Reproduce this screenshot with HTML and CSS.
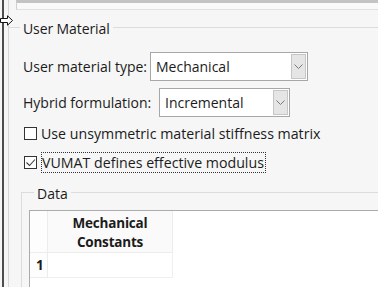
FILE: index.html
```html
<!DOCTYPE html>
<html>
<head>
<meta charset="utf-8">
<link rel="stylesheet" href="styles.css">
</head>
<body>
<div class="screen">
  <div class="edge"></div>
  <div class="main">
    <div class="prev"></div>
    <div class="group user">
      <div class="ghead">
        <span class="gline short"></span>
        <span class="gtitle">User Material</span>
        <span class="gline"></span>
      </div>
      <div class="row r1">
        <span class="label">User material type:</span>
        <div class="combo c1">
          <span class="val">Mechanical</span>
          <span class="btn"><svg width="9" height="5" viewBox="0 0 9 5"><polyline points="0.5,0.5 4.5,4.5 8.5,0.5" fill="none" stroke="#7a7a7a" stroke-width="1"/></svg></span>
        </div>
      </div>
      <div class="row r2">
        <span class="label">Hybrid formulation:</span>
        <div class="combo c2">
          <span class="val">Incremental</span>
          <span class="btn"><svg width="9" height="5" viewBox="0 0 9 5"><polyline points="0.5,0.5 4.5,4.5 8.5,0.5" fill="none" stroke="#7a7a7a" stroke-width="1"/></svg></span>
        </div>
      </div>
      <div class="check k1">
        <span class="box"></span>
        <span class="ctext">Use unsymmetric material stiffness matrix</span>
      </div>
      <div class="check k2">
        <span class="box"><svg width="11" height="11" viewBox="0 0 11 11"><polyline points="1.5,5.5 4.5,8.5 10,2.5" fill="none" stroke="#3a3a3a" stroke-width="1.1"/></svg></span>
        <span class="ctext focus">VUMAT defines effective modulus</span>
      </div>
    </div>
    <div class="data">
      <div class="dhead">
        <span class="gline short2"></span>
        <span class="dtitle">Data</span>
        <span class="gline"></span>
      </div>
      <div class="dbody">
        <div class="table">
          <div class="corner"></div>
          <div class="hcell">Mechanical<br>Constants</div>
          <div class="fill"></div>
          <div class="rh">1</div>
          <div class="cell"></div>
          <div class="fill"></div>
        </div>
      </div>
    </div>
  </div>
  <svg class="cursor" width="14" height="12" viewBox="0 0 14 12"><polygon points="0.5,3.5 7.5,3.5 7.5,0.8 12.5,5.5 7.5,10.2 7.5,7.5 0.5,7.5" fill="#fff" stroke="#111" stroke-width="1"/></svg>
</div>
</body>
</html>
```

FILE: styles.css
```css
* { box-sizing: border-box; }
html, body { margin: 0; padding: 0; }
body {
  font-family: "Open Sans", "Noto Sans", sans-serif;
  font-size: 14px;
  color: #1b1b1b;
  background: #f6f6f6;
}
.screen {
  position: relative;
  width: 378px;
  height: 287px;
  overflow: hidden;
  display: flex;
  background: #f6f6f6;
}
.edge {
  width: 2px;
  margin-left: 2px;
  margin-right: 4px;
  background: #4d4d4d;
  flex: none;
}
.main {
  width: 370px;
  flex: none;
  border-left: 1px solid #d6d6d6;
}
.prev {
  margin-left: 7px;
  height: 10px;
  border-top: 3px solid #c3c3c3;
  border-left: 1px solid #cfcfcf;
  border-bottom: 1px solid #e0e0e0;
  background: #f9f9f9;
}
.group.user {
  display: flex;
  flex-direction: column;
  padding-left: 14px;
}
.ghead {
  display: flex;
  height: 20px;
  margin-top: 9px;
  margin-left: -14px;
}
.gline {
  flex: 1;
  height: 1px;
  margin-top: 8px;
  background: #dcdcdc;
}
.gline.short { flex: none; width: 11px; }
.gtitle {
  line-height: 20px;
  padding: 0 3px;
  font-size: 14px;
  letter-spacing: -0.1px;
}
.row {
  display: flex;
  align-items: center;
}
.r1 { margin-top: 13px; }
.r2 { margin-top: 7px; }
.r1 .label { width: 127px; flex: none; }
.r2 .label { width: 136px; flex: none; }
.combo {
  height: 29px;
  background: #fff;
  border: 1px solid #a7a7a7;
  display: flex;
  align-items: stretch;
  flex: none;
}
.c1 { width: 158px; }
.c2 { width: 131px; }
.val {
  flex: 1;
  padding-left: 5px;
  line-height: 27px;
}
.btn {
  width: 15px;
  margin: 1px 1px 1px 0;
  background: #e5e5e5;
  border: 1px solid #c6c6c6;
  display: flex;
  align-items: center;
  justify-content: center;
}
.check {
  display: flex;
  align-items: center;
  height: 21px;
}
.k1 { margin-top: 6px; }
.k2 { margin-top: 8px; }
.box {
  width: 13px;
  height: 13px;
  border: 1px solid #333;
  background: #fff;
  margin-left: 1px;
  display: flex;
  align-items: center;
  justify-content: center;
  flex: none;
}
.ctext {
  margin-left: 4px;
  line-height: 19px;
  padding-right: 1px;
  white-space: nowrap;
  font-size: 14.2px;
}
.focus {
  border: 1px dotted #333;
}
.data {
  margin-left: 12px;
  margin-top: 13px;
}
.dhead {
  display: flex;
  height: 16px;
}
.dhead .gline { margin-top: 6px; }
.gline.short2 { flex: none; width: 13px; }
.dtitle {
  line-height: 16px;
  padding: 0 3px;
  font-size: 14px;
}
.dbody {
  border-left: 1px solid #dcdcdc;
  margin-top: -10px;
  padding-top: 18px;
  padding-left: 7px;
  height: 120px;
}
.table {
  background: #fff;
  border-top: 1px solid #ababab;
  border-left: 1px solid #ababab;
  height: 100px;
  display: grid;
  grid-template-columns: 18px 125px 1fr;
  grid-template-rows: 42px 25px;
}
.corner, .rh, .hcell, .cell {
  border-right: 1px solid #ececec;
  border-bottom: 1px solid #ececec;
}
.corner, .rh { background: #fdfdfd; }
.hcell {
  background: #fafafa;
  font-weight: 700;
  text-align: center;
  line-height: 19px;
  padding-top: 3px;
  font-size: 13.5px;
  letter-spacing: -0.2px;
}
.rh {
  font-weight: 700;
  font-size: 13.5px;
  line-height: 25px;
  padding-left: 6px;
}
.cell { border-color: #f0f0f0; }
.cursor {
  position: absolute;
  left: 0;
  top: 15px;
}
```
